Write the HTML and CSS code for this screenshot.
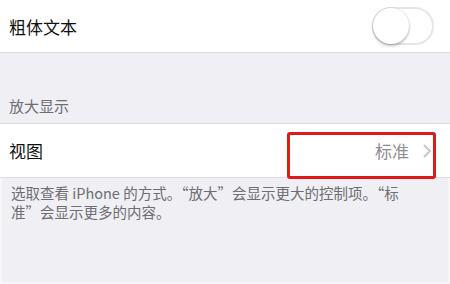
FILE: index.html
```html
<!DOCTYPE html>
<html lang="zh-CN">
<head>
    <meta charset="UTF-8">
    <title>显示缩放</title>
    <link rel="stylesheet" href="styles.css">
</head>
<body>
  <div class="page">
    <div class="cell">
      <span class="label">粗体文本</span>
      <div class="switch"><div class="knob"></div></div>
    </div>
    <div class="header">放大显示</div>
    <div class="cell view">
      <span class="label">视图</span>
      <span class="value">标准</span>
      <svg class="chevron" width="9" height="14" viewBox="0 0 9 14">
        <path d="M1.5 1.5 L7 7 L1.5 12.5" fill="none" stroke="#c7c7cc" stroke-width="2" stroke-linecap="round" stroke-linejoin="round"/>
      </svg>
      <div class="mark"></div>
    </div>
    <div class="footer">
      <p>选取查看 iPhone 的方式。“放大”会显示更大的控制项。“标准”会显示更多的内容。</p>
    </div>
  </div>
</body>
</html>
```

FILE: styles.css
```css
* {
  margin: 0px;
  padding: 0px;
  box-sizing: border-box;
}
body {
  width: 450px;
  height: 284px;
  overflow: hidden;
  background: #efeff4;
  font-family: "Noto Sans CJK SC", "Noto Sans", sans-serif;
}
.page {
  display: flex;
  flex-direction: column;
  height: 284px;
}
.cell {
  position: relative;
  height: 53px;
  background: #fff;
  display: flex;
  align-items: center;
  padding-left: 9px;
  padding-right: 16px;
  border-bottom: 1px solid #dcdce0;
}
.label {
  flex-grow: 1;
  font-size: 17px;
  color: #111;
}
.switch {
  width: 62px;
  height: 38px;
  border-radius: 19px;
  border: 2px solid #e6e6e9;
  background: #fff;
}
.knob {
  width: 36px;
  height: 36px;
  margin-top: -1px;
  margin-left: -1px;
  border-radius: 50%;
  background: #fff;
  box-shadow: 0 2px 3px rgba(0, 0, 0, 0.25), 0 0 0 1px rgba(0, 0, 0, 0.06);
}
.header {
  height: 71px;
  display: flex;
  align-items: flex-end;
  padding-left: 9px;
  padding-bottom: 7px;
  font-size: 15px;
  color: #6d6d72;
  border-bottom: 1px solid #dcdce0;
}
.view {
  height: 54px;
  padding-right: 18px;
}
.value {
  font-size: 17px;
  color: #8e8e93;
  margin-right: 14px;
}
.chevron {
  display: block;
}
.mark {
  position: absolute;
  left: 287px;
  top: 8px;
  width: 149px;
  height: 47px;
  border: 3px solid #e0191b;
  border-radius: 3px;
}
.footer {
  flex-grow: 1;
  padding: 5px 28px 0 9px;
  border-left: 2px solid #f7f7f9;
  border-right: 2px solid #f7f7f9;
  border-bottom: 2px solid #f7f7f9;
}
.footer p {
  font-size: 14.5px;
  line-height: 19px;
  color: #6d6d72;
}
```
